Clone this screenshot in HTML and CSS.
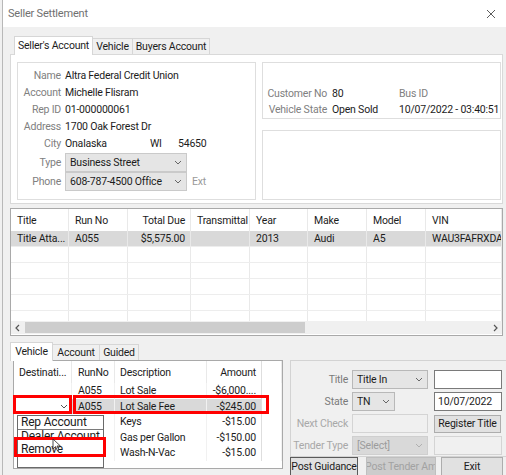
FILE: index.html
```html
<!DOCTYPE html>
<html lang="en">
<head>
    <meta charset="UTF-8">
    <title>Seller Settlement</title>
    <link rel="stylesheet" href="styles.css">
</head>
<body>
    <div class="window">
        <div class="titlebar">
            <span class="title">Seller Settlement</span>
            <svg class="close" width="10" height="10" viewBox="0 0 10 10"><path d="M1 1L9 9M9 1L1 9" stroke="#5c5c5c" stroke-width="1" fill="none"/></svg>
        </div>

        <div class="tabstrip top-tabs">
            <div class="tab active w-seller">Seller's Account</div>
            <div class="tab w-vehicle">Vehicle</div>
            <div class="tab w-buyers">Buyers Account</div>
        </div>

        <div class="top-page">
            <div class="box seller">
                <div class="field"><span class="lbl">Name</span><span>Altra Federal Credit Union</span></div>
                <div class="field"><span class="lbl">Account</span><span>Michelle Flisram</span></div>
                <div class="field"><span class="lbl">Rep ID</span><span>01-000000061</span></div>
                <div class="field"><span class="lbl">Address</span><span>1700 Oak Forest Dr</span></div>
                <div class="field"><span class="lbl">City</span><span class="city">Onalaska</span><span class="state">WI</span><span>54650</span></div>
                <div class="field combo-row first"><span class="lbl">Type</span>
                    <div class="combo wide"><span>Business Street</span><svg class="chev" width="8" height="5" viewBox="0 0 8 5"><polyline points="1,1 4,4 7,1" stroke="#666" fill="none"/></svg></div>
                </div>
                <div class="field combo-row"><span class="lbl">Phone</span>
                    <div class="combo wide"><span>608-787-4500 Office</span><svg class="chev" width="8" height="5" viewBox="0 0 8 5"><polyline points="1,1 4,4 7,1" stroke="#666" fill="none"/></svg></div>
                    <span class="ext">Ext</span>
                </div>
            </div>
            <div class="right-col">
                <div class="box info">
                    <div class="info-row"><span class="lbl">Customer No</span><span class="mid">80</span><span class="lbl">Bus ID</span></div>
                    <div class="info-row"><span class="lbl">Vehicle State</span><span class="mid">Open Sold</span><span>10/07/2022 - 03:40:51 AM</span></div>
                </div>
                <div class="box blank"></div>
            </div>
        </div>

        <div class="vgrid">
            <div class="vrow vhead">
                <div>Title</div><div>Run No</div><div class="num">Total Due</div><div>Transmittal</div><div>Year</div><div>Make</div><div>Model</div><div>VIN</div>
            </div>
            <div class="vrow vdata sel">
                <div>Title Atta...</div><div>A055</div><div class="num">$5,575.00</div><div></div><div>2013</div><div>Audi</div><div>A5</div><div>WAU3FAFRXDA4</div>
            </div>
            <div class="vrow vdata"><div></div><div></div><div></div><div></div><div></div><div></div><div></div><div></div></div>
            <div class="vrow vdata"><div></div><div></div><div></div><div></div><div></div><div></div><div></div><div></div></div>
            <div class="vrow vdata"><div></div><div></div><div></div><div></div><div></div><div></div><div></div><div></div></div>
            <div class="vrow vdata"><div></div><div></div><div></div><div></div><div></div><div></div><div></div><div></div></div>
            <div class="vrow vfill"><div></div><div></div><div></div><div></div><div></div><div></div><div></div><div></div></div>
            <div class="hscroll">
                <div class="arrow"><svg width="5" height="8" viewBox="0 0 5 8"><polyline points="4,1 1,4 4,7" stroke="#555" stroke-width="1.2" fill="none"/></svg></div>
                <div class="thumb"></div>
                <div class="track"></div>
                <div class="arrow"><svg width="5" height="8" viewBox="0 0 5 8"><polyline points="1,1 4,4 1,7" stroke="#555" stroke-width="1.2" fill="none"/></svg></div>
            </div>
        </div>

        <div class="lower">
            <div class="lower-left">
                <div class="tabstrip low-tabs">
                    <div class="tab active w-veh2">Vehicle</div>
                    <div class="tab w-account">Account</div>
                    <div class="tab w-guided">Guided</div>
                </div>
                <div class="charges">
                    <div class="crow chead">
                        <div>Destinati...</div><div>RunNo</div><div>Description</div><div class="num">Amount</div><div></div>
                    </div>
                    <div class="crow cdata">
                        <div></div><div>A055</div><div>Lot Sale</div><div class="num">-$6,000....</div><div></div>
                    </div>
                    <div class="crow cdata">
                        <div class="cell-combo"><svg class="chev" width="8" height="5" viewBox="0 0 8 5"><polyline points="1,1 4,4 7,1" stroke="#555" fill="none"/></svg></div>
                        <div class="sel">A055</div><div class="sel">Lot Sale Fee</div><div class="num sel">-$245.00</div><div></div>
                    </div>
                    <div class="crow cdata">
                        <div></div><div></div><div>Keys</div><div class="num">-$15.00</div><div></div>
                    </div>
                    <div class="crow cdata">
                        <div></div><div></div><div>Gas per Gallon</div><div class="num">-$150.00</div><div></div>
                    </div>
                    <div class="crow cdata">
                        <div></div><div></div><div>Wash-N-Vac</div><div class="num">-$15.00</div><div></div>
                    </div>
                </div>
            </div>

            <div class="lower-right">
                <div class="panel">
                    <div class="prow">
                        <span class="plbl">Title</span>
                        <div class="pcell"><div class="pcombo full"><span>Title In</span><svg class="chev" width="8" height="5" viewBox="0 0 8 5"><polyline points="1,1 4,4 7,1" stroke="#666" fill="none"/></svg></div></div>
                        <div class="textbox"></div>
                    </div>
                    <div class="prow">
                        <span class="plbl">State</span>
                        <div class="pcell"><div class="pcombo short"><span>TN</span><svg class="chev" width="8" height="5" viewBox="0 0 8 5"><polyline points="1,1 4,4 7,1" stroke="#666" fill="none"/></svg></div></div>
                        <div class="textbox">10/07/2022</div>
                    </div>
                    <div class="prow">
                        <span class="plbl off">Next Check</span>
                        <div class="pcell"><div class="textbox disabled full"></div></div>
                        <div class="btn reg">Register Title</div>
                    </div>
                    <div class="prow">
                        <span class="plbl off">Tender Type</span>
                        <div class="pcell"><div class="pcombo full disabled"><span>[Select]</span><svg class="chev" width="8" height="5" viewBox="0 0 8 5"><polyline points="1,1 4,4 7,1" stroke="#b0b0b0" fill="none"/></svg></div></div>
                        <div class="textbox disabled"></div>
                    </div>
                </div>
                <div class="btns">
                    <div class="btn b-guidance">Post Guidance</div>
                    <div class="btn b-tender">Post Tender Am</div>
                    <div class="btn b-exit">Exit</div>
                </div>
            </div>
        </div>
    </div>

    <div class="droplist">
        <div class="item first">Rep Account</div>
        <div class="item">Dealer Account</div>
        <div class="item">Remove</div>
    </div>

    <div class="mark m1"></div>
    <div class="mark m2"></div>
    <div class="mark m3"></div>

    <svg class="cursor" width="10" height="14" viewBox="0 0 10 14"><path d="M1 1L1 11L3.5 8.6L5.4 12.6L6.9 11.9L5 8L8.4 8Z" fill="#fff" stroke="#222" stroke-width="0.8"/></svg>
</body>
</html>
```

FILE: styles.css
```css
* {
    box-sizing: border-box;
}

body {
    margin: 0;
    width: 506px;
    height: 475px;
    overflow: hidden;
    position: relative;
    background: #f0f0f0;
    font-family: Roboto, "Liberation Sans", sans-serif;
    font-size: 10.5px;
    letter-spacing: -0.2px;
    color: #1c1c1c;
}

.window {
    margin-left: 2px;
    border-left: 1px solid #b8b8b8;
    height: 475px;
}

/* title bar */
.titlebar {
    height: 27px;
    background: #fff;
    display: flex;
    align-items: center;
    justify-content: space-between;
    padding: 0 10px 0 5px;
}

.title {
    color: #707070;
    font-size: 11px;
}

/* tabs */
.tabstrip {
    display: flex;
    align-items: flex-end;
}

.top-tabs {
    height: 27px;
    padding-left: 11px;
}

.low-tabs {
    height: 24px;
}

.tab {
    height: 16px;
    line-height: 15px;
    border: 1px solid #d6d6d6;
    border-bottom: none;
    background: #f0f0f0;
    text-align: center;
    white-space: nowrap;
}

.tab + .tab {
    margin-left: -1px;
}

.tab.active {
    height: 19px;
    line-height: 17px;
    margin-bottom: -1px;
    background: #fff;
    position: relative;
    z-index: 1;
}

.w-seller { width: 79px; }
.w-vehicle { width: 41px; }
.w-buyers { width: 78px; }
.w-veh2 { width: 43px; }
.w-account { width: 48px; }
.w-guided { width: 40px; }

/* seller's account page */
.top-page {
    margin-left: 7px;
    width: 493px;
    height: 150px;
    border: 1px solid #d9d9d9;
    background: #fff;
    display: flex;
    gap: 6px;
    padding: 7px 0 0 6px;
}

.box {
    border: 1px solid #dedede;
    background: #fff;
}

.seller {
    width: 239px;
    height: 138px;
    padding-top: 4px;
}

.right-col {
    width: 239px;
    display: flex;
    flex-direction: column;
    gap: 11px;
}

.info {
    height: 57px;
    padding-top: 22px;
    overflow: hidden;
}

.blank {
    height: 70px;
}

.field {
    display: flex;
    align-items: center;
    height: 17px;
    white-space: nowrap;
}

.lbl {
    color: #808080;
}

.seller .lbl {
    width: 43px;
    margin-right: 4px;
    text-align: right;
    flex: none;
}

.city { width: 85px; }
.state { width: 28px; }

.combo-row {
    height: 19px;
}

.combo-row.first {
    margin-top: 1px;
}

.combo {
    display: flex;
    align-items: center;
    justify-content: space-between;
    height: 19px;
    border: 1px solid #cacaca;
    background: #e5e5e5;
    padding: 0 4px;
}

.combo.wide {
    width: 122px;
}

.ext {
    margin-left: 5px;
    color: #9a9a9a;
}

.info-row {
    display: flex;
    align-items: center;
    height: 16px;
    white-space: nowrap;
}

.info .lbl:first-child {
    width: 64px;
    margin-right: 5px;
    text-align: right;
    flex: none;
}

.info .mid {
    width: 67px;
    flex: none;
}

/* vehicles grid */
.vgrid {
    margin: 4px 0 0 7px;
    width: 493px;
    height: 128px;
    border: 1px solid #a9a9a9;
    background: #fff;
    display: flex;
    flex-direction: column;
    overflow: hidden;
}

.vrow {
    display: grid;
    grid-template-columns: 58px 59px 63px 59px 58px 59px 59px 76px;
}

.vrow > div,
.crow > div {
    border-right: 1px solid #e9e9e9;
    padding-left: 6px;
    display: flex;
    align-items: center;
    overflow: hidden;
    white-space: nowrap;
}

.vhead {
    height: 22px;
    flex: none;
}

.vdata {
    height: 16px;
    flex: none;
    border-bottom: 1px solid #ededed;
}

.vfill {
    flex: 1;
}

.num {
    justify-content: flex-end;
    padding-right: 5px;
}

.vrow > .num {
    padding-right: 5px;
}

.sel {
    background: #d9d9d9;
}

.hscroll {
    height: 13px;
    flex: none;
    margin-bottom: 1px;
    background: #f0f0f0;
    display: flex;
    align-items: center;
}

.arrow {
    width: 13px;
    height: 13px;
    display: flex;
    align-items: center;
    justify-content: center;
}

.thumb {
    margin-left: 1px;
    width: 280px;
    height: 11px;
    background: #cdcdcd;
}

.track {
    flex: 1;
}

/* lower area */
.lower {
    display: flex;
    gap: 6px;
    margin-left: 7px;
}

.lower-left {
    width: 274px;
    flex: none;
}

.charges {
    margin-left: 3px;
    width: 270px;
    height: 109px;
    border: 1px solid #a9a9a9;
    background: #fff;
}

.crow {
    display: grid;
    grid-template-columns: 58px 43px 92px 55px 20px;
}

.crow > div:nth-child(2) {
    padding-left: 6px;
}

.crow > div:nth-child(3) {
    padding-left: 5px;
}

.crow > div:first-child {
    padding-left: 5px;
}

.chead {
    height: 22px;
}

.cdata {
    height: 15.5px;
}

.cdata > div {
    border-right-color: #f1f1f1;
}

.crow > div:nth-child(4) {
    border-right-color: #dedede;
}

.cell-combo {
    justify-content: flex-end;
    padding-right: 3px;
    background: #fff;
}

/* right panel */
.lower-right {
    width: 216px;
    flex: none;
}

.panel {
    margin-top: 24px;
    height: 97px;
    border: 1px solid #d3d3d3;
    border-right: none;
    padding-top: 9px;
    display: flex;
    flex-direction: column;
    gap: 3px;
}

.prow {
    display: flex;
    align-items: center;
    height: 19px;
    white-space: nowrap;
}

.plbl {
    width: 57px;
    margin-right: 4px;
    text-align: right;
    color: #7a7a7a;
    flex: none;
}

.plbl.off {
    color: #a8a8a8;
}

.pcell {
    width: 76px;
    margin-right: 6px;
    flex: none;
}

.pcombo {
    display: flex;
    align-items: center;
    justify-content: space-between;
    height: 19px;
    border: 1px solid #b8b8b8;
    background: #e5e5e5;
    padding: 0 4px;
}

.pcombo.full { width: 76px; }
.pcombo.short { width: 43px; }

.pcombo.disabled {
    background: #d9d9d9;
    border-color: #cfcfcf;
    color: #9c9c9c;
}

.textbox {
    width: 68px;
    height: 19px;
    border: 1px solid #7a7a7a;
    background: #fff;
    padding-left: 3px;
    display: flex;
    align-items: center;
}

.textbox.disabled {
    border-color: #d4d4d4;
    background: #f0f0f0;
}

.textbox.full {
    width: 76px;
}

.btn {
    height: 19px;
    border: 1px solid #adadad;
    background: #e1e1e1;
    display: flex;
    align-items: center;
    justify-content: center;
    white-space: nowrap;
    overflow: hidden;
    flex: none;
}

.btn.reg {
    width: 67px;
    height: 18px;
}

.btns {
    display: flex;
}

.b-guidance {
    width: 68px;
    border-color: #5a5a5a;
}

.b-tender {
    width: 70px;
    margin-left: 8px;
    background: #cccccc;
    border-color: #bfbfbf;
    color: #a2a2a2;
}

.b-exit {
    width: 62px;
    margin-left: 5px;
}

/* open dropdown list and screenshot annotations */
.droplist {
    position: absolute;
    left: 17px;
    top: 415px;
    width: 87px;
    height: 53px;
    border: 1px solid #6a6a6a;
    background: #fff;
    font-size: 12px;
    line-height: 12px;
}

.item {
    padding-left: 3px;
    height: 12.5px;
    white-space: nowrap;
}

.item.first {
    height: 14px;
    border-bottom: 1px solid #7a7a7a;
}

.mark {
    position: absolute;
    border: 3px solid #ff0000;
}

.m1 { left: 13px; top: 395px; width: 59px; height: 19px; }
.m2 { left: 73px; top: 395px; width: 196px; height: 19px; }
.m3 { left: 14px; top: 437px; width: 92px; height: 20px; }

.cursor {
    position: absolute;
    left: 52px;
    top: 438px;
}
```
